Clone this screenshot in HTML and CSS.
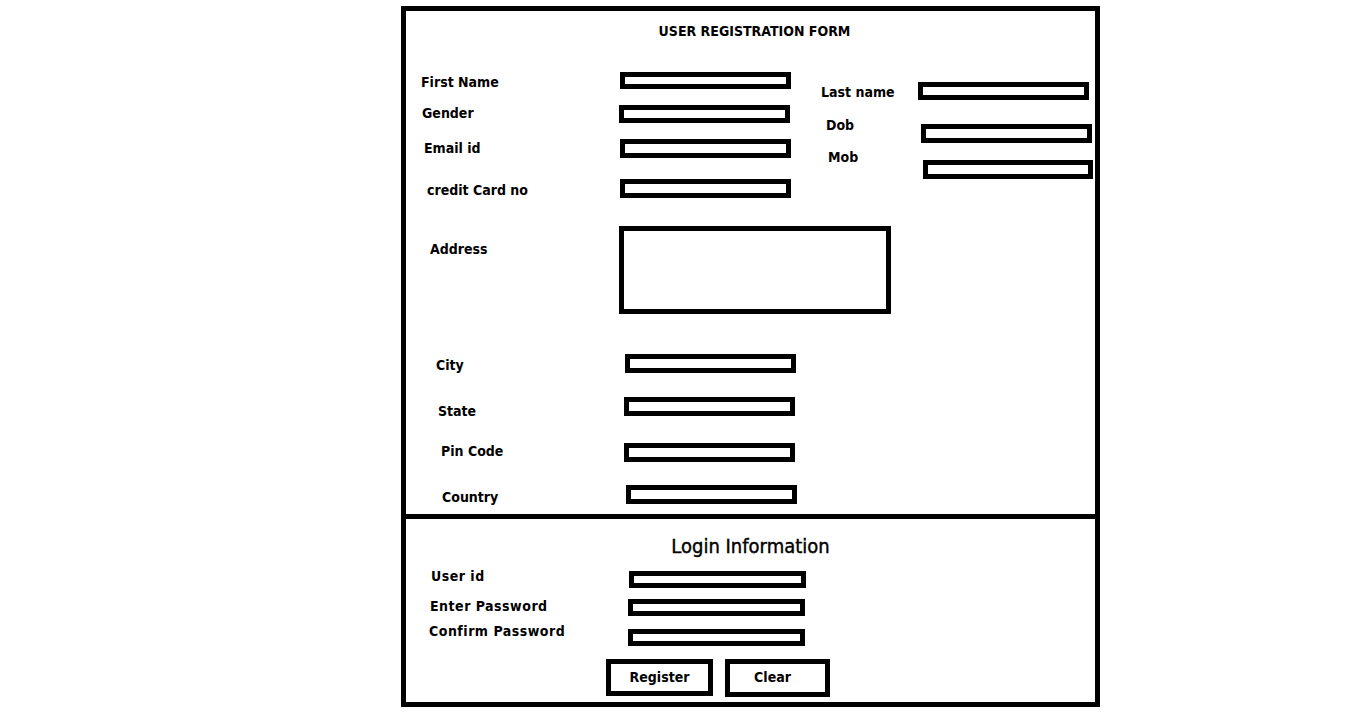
FILE: index.html
```html
<!DOCTYPE html>
<html lang="en">
<head>
    <meta charset="UTF-8">
    <meta name="viewport" content="width=device-width, initial-scale=1.0">
    <title>User Registration Form</title>
    <link rel="stylesheet" href="styles.css">
</head>
<body>
    <div class="sheet">
        <section class="details">
            <h1 class="form-title">USER REGISTRATION FORM</h1>
            <div class="columns">
                <div class="col col-left">
                    <div class="row first-name"><label for="firstName">First Name</label><input class="field" id="firstName"></div>
                    <div class="row gender"><label for="gender">Gender</label><input class="field" id="gender"></div>
                    <div class="row email"><label for="email">Email id</label><input class="field" id="email"></div>
                    <div class="row credit"><label for="card">credit Card no</label><input class="field" id="card"></div>
                </div>
                <div class="col col-right">
                    <div class="row last-name"><label for="lastName">Last name</label><input class="field" id="lastName"></div>
                    <div class="row dob"><label for="dob">Dob</label><input class="field" id="dob"></div>
                    <div class="row mob"><label for="mob">Mob</label><input class="field" id="mob"></div>
                </div>
            </div>
            <div class="row address"><label for="address">Address</label><textarea class="field" id="address"></textarea></div>
            <div class="row city"><label for="city">City</label><input class="field" id="city"></div>
            <div class="row state"><label for="state">State</label><input class="field" id="state"></div>
            <div class="row pin"><label for="pin">Pin Code</label><input class="field" id="pin"></div>
            <div class="row country"><label for="country">Country</label><input class="field" id="country"></div>
        </section>
        <section class="login">
            <h2 class="login-title">Login Information</h2>
            <div class="row user-id"><label for="userId">User id</label><input class="field" id="userId"></div>
            <div class="row password"><label for="password">Enter Password</label><input class="field" id="password" type="password"></div>
            <div class="row confirm"><label for="confirm">Confirm Password</label><input class="field" id="confirm" type="password"></div>
            <div class="actions">
                <button class="btn register">Register</button>
                <button class="btn clear">Clear</button>
            </div>
        </section>
    </div>
</body>
</html>
```

FILE: styles.css
```css
body {
    margin: 0;
    background-color: white;
    color: black;
    font-family: "DejaVu Sans Condensed", "Liberation Sans", sans-serif;
}
.sheet {
    width: 699px;
    height: 701px;
    margin: 6px 0 0 401px;
    border: 5px solid black;
    box-sizing: border-box;
}
.details {
    height: 503px;
    border-bottom: 5px solid black;
}
.form-title {
    margin: 0;
    padding: 12px 0 0 8px;
    height: 16px;
    font-size: 14px;
    line-height: 16px;
    font-weight: bold;
    text-align: center;
}
.columns {
    display: flex;
}
.col-left {
    width: 400px;
}
.col-right {
    flex: 1;
}

/* each row: gap above, field height, label x, field x, label y, field width */
.row {
    display: flex;
    align-items: flex-start;
    margin-top: var(--gap);
    height: var(--h);
}
.row label {
    flex: none;
    margin-left: var(--lx);
    width: calc(var(--ix) - var(--lx));
    margin-top: var(--ly);
    font-size: 14px;
    line-height: 16px;
    font-weight: bold;
    white-space: nowrap;
}
.field {
    flex: none;
    width: var(--w);
    height: var(--h);
    margin: 0;
    padding: 0;
    border: 5px solid black;
    border-radius: 0;
    box-sizing: border-box;
    background-color: white;
    outline: none;
    resize: none;
}

.first-name { --gap: 33px; --h: 17px; --lx: 15px; --ix: 214px; --ly: 2px; --w: 171px; }
.gender     { --gap: 16px; --h: 18px; --lx: 16px; --ix: 213px; --ly: 0px; --w: 171px; }
.email      { --gap: 16px; --h: 19px; --lx: 18px; --ix: 214px; --ly: 1px; --w: 171px; }
.credit     { --gap: 21px; --h: 19px; --lx: 21px; --ix: 214px; --ly: 3px; --w: 171px; }
.last-name  { --gap: 43px; --h: 18px; --lx: 15px; --ix: 112px; --ly: 2px; --w: 171px; }
.dob        { --gap: 24px; --h: 19px; --lx: 20px; --ix: 115px; --ly: -7px; --w: 171px; }
.mob        { --gap: 17px; --h: 19px; --lx: 22px; --ix: 117px; --ly: -11px; --w: 170px; }
.address    { --gap: 28px; --h: 88px; --lx: 24px; --ix: 213px; --ly: 15px; --w: 272px; }
.city       { --gap: 40px; --h: 19px; --lx: 30px; --ix: 219px; --ly: 3px; --w: 171px; }
.state      { --gap: 24px; --h: 19px; --lx: 32px; --ix: 218px; --ly: 6px; --w: 171px; }
.pin        { --gap: 27px; --h: 19px; --lx: 35px; --ix: 218px; --ly: 0px; --w: 171px; }
.country    { --gap: 23px; --h: 19px; --lx: 36px; --ix: 220px; --ly: 4px; --w: 171px; }
.user-id    { --gap: 13px; --h: 17px; --lx: 25px; --ix: 223px; --ly: -3px; --w: 177px; }
.password   { --gap: 11px; --h: 17px; --lx: 24px; --ix: 222px; --ly: -1px; --w: 177px; }
.confirm    { --gap: 13px; --h: 17px; --lx: 23px; --ix: 222px; --ly: -6px; --w: 177px; }

.login .row label {
    letter-spacing: 0.5px;
}
.login-title {
    margin: 0;
    padding-top: 15px;
    font-size: 20px;
    line-height: 24px;
    font-weight: normal;
    text-align: center;
    -webkit-text-stroke: 0.4px black;
}
.actions {
    display: flex;
    gap: 12px;
    margin: 13px 0 0 200px;
}
.btn {
    padding: 0 0 2px;
    border: 5px solid black;
    border-radius: 0;
    background-color: white;
    color: black;
    font-family: inherit;
    font-size: 14px;
    font-weight: bold;
}
.register {
    width: 107px;
    height: 37px;
}
.clear {
    width: 105px;
    height: 38px;
    padding-right: 10px;
}
```
